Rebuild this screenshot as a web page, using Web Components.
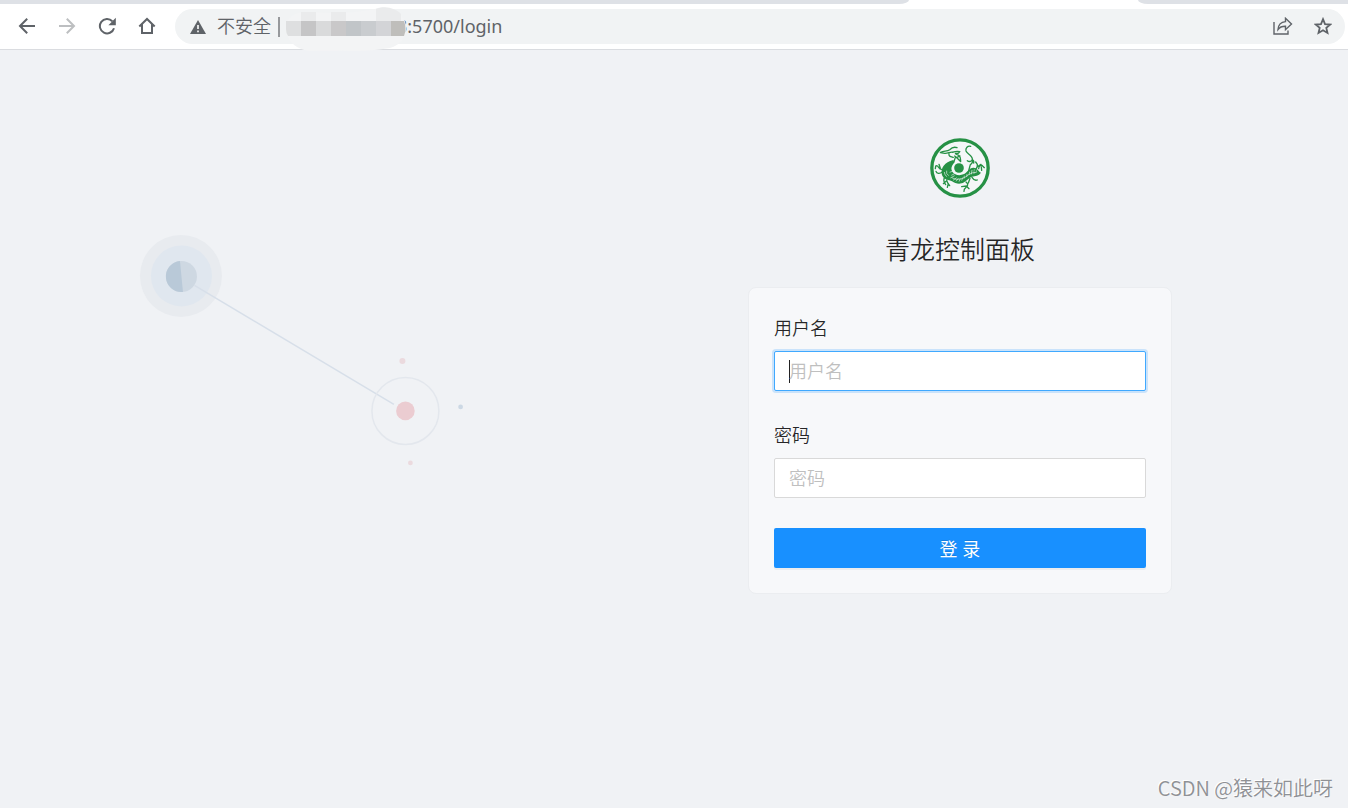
<!DOCTYPE html>
<html lang="zh-CN">
<head>
<meta charset="utf-8">
<title>青龙控制面板</title>
<style>
body {
  margin: 0;
  min-height: 100vh;
  display: flex;
  flex-direction: column;
  background: #f0f2f5;
  color: rgba(0,0,0,.85);
  font-family: "Noto Sans", "Noto Sans CJK SC", sans-serif;
  font-size: 18px;
  font-weight: 350;
}
</style>
</head>
<body>

<browser-bar note="不安全" address="3:5700/login"></browser-bar>
<login-page>
  <node-art slot="art"></node-art>
  <login-card heading="青龙控制面板">
    <dragon-logo slot="logo"></dragon-logo>
    <form-field name="username" label="用户名" active></form-field>
    <form-field name="password" label="密码" type="password"></form-field>
    <submit-button>登 录</submit-button>
  </login-card>
  <water-mark slot="mark">CSDN @猿来如此呀</water-mark>
</login-page>

<script>
function define(name, html, setup) {
  const template = document.createElement('template')
  template.innerHTML = html

  customElements.define(name, class extends HTMLElement {
    constructor() {
      super()
      this.attachShadow({ mode: 'open' }).appendChild(template.content.cloneNode(true))
    }

    connectedCallback() {
      if (setup) setup(this, this.shadowRoot)
    }
  })
}

/* Browser chrome: tab edge, navigation buttons, address bar */
define('browser-bar', `
<style>
:host {
  display: block;
  background: #fff;
  border-bottom: 1px solid #dadce0;
  color: #5f6368;
}

.tabs {
  display: flex;
  justify-content: space-between;
  height: 4px;
}

.tabs span {
  background: #dee1e6;
}

.tabs .before {
  flex: 0 1 909px;
  border-bottom-right-radius: 10px 4px;
}

.tabs .after {
  flex: 0 1 210px;
  border-bottom-left-radius: 10px 4px;
}

.toolbar {
  display: flex;
  align-items: center;
  padding: 5px 3px 5px 7px;
}

button {
  display: flex;
  align-items: center;
  justify-content: center;
  width: 40px;
  height: 36px;
  margin: -1px 0 0;
  padding: 0;
  border: 0;
  background: none;
  color: inherit;
}

button:disabled {
  color: #bdbfc1;
}

svg {
  display: block;
}

.address {
  flex: 1;
  min-width: 0;
  display: flex;
  align-items: center;
  height: 35px;
  margin-left: 8px;
  padding: 0 2px 0 15px;
  border-radius: 18px;
  background: #f1f3f4;
}

.note, .url {
  line-height: 24px;
  padding-bottom: 2px;
}

.note {
  margin-left: 11px;
}

.divider {
  width: 2px;
  height: 20px;
  margin: 0 6px 0 7px;
  background: #97999c;
}

/* hides the host, laid over the start of the address */
.mask {
  position: relative;
  z-index: 1;
  flex: none;
  margin: -3px -10px -7px 0;
}

.url {
  flex: 1;
  min-width: 0;
  font-weight: 400;
}
</style>

<div class="tabs"><span class="before"></span><span class="after"></span></div>
<div class="toolbar">
  <button aria-label="后退">
    <svg width="18" height="18" viewBox="0 0 18 18" fill="none" stroke="currentColor" stroke-width="2"><path d="M17 9H2.5M9.2 1.8 2 9l7.2 7.2"/></svg>
  </button>
  <button aria-label="前进" disabled>
    <svg width="18" height="18" viewBox="0 0 18 18" fill="none" stroke="currentColor" stroke-width="2"><path d="M1 9h14.500M8.800 1.800 16 9l-7.200 7.200"/></svg>
  </button>
  <button aria-label="刷新">
    <svg width="18" height="18" viewBox="0 0 18 18"><path d="M14.300 4.200A7.200 7.200 0 1 0 16 11.200" fill="none" stroke="currentColor" stroke-width="2"/><path d="M17.800.8v7.400h-7.400z" fill="currentColor"/></svg>
  </button>
  <button aria-label="主页">
    <svg width="18" height="18" viewBox="0 0 18 18" fill="none" stroke="currentColor" stroke-width="2"><path d="M1.300 9.500 9 2l7.700 7.500M4 7.500V16h10V7.500"/></svg>
  </button>
  <div class="address">
    <svg width="16" height="16" viewBox="0 0 16 16"><path d="M8 1 0 15h16z" fill="currentColor"/><path d="M8 6v4M8 11.500v1.800" stroke="#fff" stroke-width="1.600"/></svg>
    <span class="note"></span>
    <span class="divider"></span>
    <svg class="mask" width="121" height="44" viewBox="0 0 121 44">
      <path d="M0 22C0 10 8 5 22 5c25 2 48 1 67-3 12-5 30 3 31 17 1 10-5 19-16 22-28 5-52 2-78 3C12 44 0 34 0 22z" fill="#f3f4f5"/>
      <path d="M15 5h15v9H15zM45 5h15v9H45zM90 2c10-4 20 0 25 5v7H90z" fill="#eaebec"/>
      <path d="M0 14h15v15H2Q0 26 0 22z" fill="#dedfe0"/>
      <path d="M15 14h15v15H15z" fill="#c5c5c6"/>
      <path d="M30 14h15v15H30z" fill="#d9dadb"/>
      <path d="M45 14h15v15H45z" fill="#c9c8c9"/>
      <path d="M60 14h15v15H60z" fill="#c1c5c8"/>
      <path d="M75 14h15v15H75z" fill="#c9cccf"/>
      <path d="M90 14h15v15H90z" fill="#d3d4d7"/>
      <path d="M105 14h13q3 8 0 15h-13z" fill="#bfbebb"/>
    </svg>
    <span class="url"></span>
    <button aria-label="分享">
      <svg width="20" height="18" viewBox="0 0 20 18" fill="none" stroke="currentColor" stroke-width="1.400"><path d="M1 5v12h14v-3.500M12.500 1.300 18.500 7l-6 5.700V9.300C9 9.200 6.700 10.200 5 12.500 5.300 8 8 5 12.500 4.600z"/></svg>
    </button>
    <button aria-label="收藏">
      <svg width="18" height="18" viewBox="0 0 18 18" fill="none" stroke="currentColor" stroke-width="1.800"><path d="m9 2.200 2 4.900 5.300.4-4 3.400 1.200 5.100L9 13.300 4.500 16l1.200-5.100-4-3.400 5.300-.4z"/></svg>
    </button>
  </div>
</div>
`, (el, root) => {
  root.querySelector('.note').textContent = el.getAttribute('note')
  root.querySelector('.url').textContent = el.getAttribute('address')
})

define('login-page', `
<style>
:host {
  flex: 1;
  display: grid;
  grid-template-columns: 14fr 19fr;
  grid-template-rows: 1fr auto;
}

main {
  display: flex;
  justify-content: center;
  padding: 88px 16px 24px;
}

footer {
  grid-column: 1 / -1;
  display: flex;
  justify-content: flex-end;
  padding: 0 15px 5px;
}
</style>

<slot name="art"></slot>
<main><slot></slot></main>
<footer><slot name="mark"></slot></footer>
`)

/* Faint connected nodes at the left */
define('node-art', `
<style>
:host {
  display: block;
  min-width: 0;
}

svg {
  display: block;
  width: 100%;
}
</style>

<svg viewBox="0 0 572 460" aria-hidden="true">
  <circle cx="181" cy="226" r="41" fill="#e8ebef"/>
  <circle cx="181.500" cy="226" r="30.500" fill="#e0e7ef"/>
  <circle cx="181.500" cy="226.500" r="15.500" fill="#ced8e2"/>
  <path d="M180 211a15.500 15.500 0 1 0 3 31z" fill="#b9c9d8"/>
  <path d="M194.500 235.500 394 354.500" stroke="#d7dfe9" stroke-width="1.500"/>
  <circle cx="405.500" cy="361" r="33.500" fill="none" stroke="#e3e7ed" stroke-width="1.500"/>
  <circle cx="405.500" cy="361" r="9.300" fill="#ebccd1"/>
  <circle cx="402.500" cy="311" r="3" fill="#ebdade"/>
  <circle cx="460.700" cy="357" r="2.400" fill="#ccd8e4"/>
  <circle cx="410.500" cy="413" r="2.400" fill="#ebdade"/>
</svg>
`)

define('login-card', `
<style>
:host {
  flex: 0 1 424px;
  min-width: 0;
}

header {
  display: flex;
  flex-direction: column;
  align-items: center;
  gap: 31px;
}

h1 {
  margin: 0;
  font-size: 25px;
  line-height: 40px;
  font-weight: inherit;
}

form {
  display: flex;
  flex-direction: column;
  gap: 30px;
  margin-top: 18px;
  padding: 26px 25px 25px;
  border: 1px solid #ebedf0;
  border-radius: 8px;
  background: #f7f8fa;
}
</style>

<header>
  <slot name="logo"></slot>
  <h1></h1>
</header>
<form><slot></slot></form>
`, (el, root) => {
  root.querySelector('h1').textContent = el.getAttribute('heading')
})

define('dragon-logo', `
<style>
:host, svg {
  display: block;
}
</style>

<svg width="60" height="60" viewBox="30 30 180 180" role="img" aria-label="青龙">
  <circle cx="120" cy="120" r="84.500" fill="#f5f7f8" stroke="#269145" stroke-width="10"/>
  <!-- body and tail -->
  <path d="M100 96c-14 3-22 9-29 17-9 12-8 28 1 37 7 7 17 5 24 10 11 8 25 10 36 3 10-6 14-14 24-17 10-2 20-2 27-12-8-4-12-15-22-15-13-1-19 15-31 20-11 5-27 2-33-8-7-12 2-22 7-28z" fill="#269145"/>
  <path d="M89 133l10-4M94 142l10-5M91 150l13-7M99 157l11-8M108 160l7-9M117 161l4-10M125 158l3-9M132 152l1-9M140 147l1-9M147 141l2-10M154 139l2-13M162 137l1-13M169 134l-1-11M95 149q12 8 27 4 14-4 24-13 9-7 22-7M80 128q-3 9 6 15M73 132q0 10 8 14" fill="none" stroke="#f5f7f8" stroke-width="1.800"/>
  <g fill="none" stroke="#269145" stroke-width="4" stroke-linecap="round">
    <!-- head, horns and beard -->
    <path d="M62 73c10-5 20-2 27-8 8-8 17-8 22-6M61 74l13 2c10 1 18-6 25-3M87 78c-2 7 6 8 13 10M97 73c9-3 14-5 22-2-2 5-8 6-14 5l14 8-9 5M104 84c6 4 12 11 17 16M106 88l-4 13M117 84c7 4 4 11 5 17"/>
    <!-- whip above the pearl -->
    <path d="M152 55c-9-2-16 5-14 14 3 9 20 13 19 25-1 7-10 8-15 4M157 93c4 8-1 13-6 17l-5 18M157 96q6 2 4 9"/>
    <!-- claws -->
    <path d="M165 130c2-9 9-11 7-21M172 109l-5-7M176 122c0-9 8-13 12-8l5 5M174 115l9-6M184 117l1 10"/>
    <path d="M66 124c-11 2-9-12-18-11M67 132c-8 6-17 5-19-2M47 115l-1 7M57 109l4 12"/>
    <path d="M74 148c-6 9-2 15 3 22M80 156c1 8 4 11 9 17M78 160l-8 7M84 170l-2 8"/>
    <path d="M138 162c6 5 7 10 1 15-5 4-8 8-7 13M125 176l14-2 8 8M156 148c5 8 9 11 16 8M150 151l-5 14"/>
  </g>
  <circle cx="117" cy="120" r="14.500" fill="#269145"/>
</svg>
`)

define('form-field', `
<style>
:host {
  display: flex;
  flex-direction: column;
  gap: 9px;
}

label {
  line-height: 28px;
}

input {
  box-sizing: border-box;
  width: 100%;
  height: 40px;
  padding: 0 14px;
  border: 1px solid #d9d9d9;
  border-radius: 2px;
  outline: 0;
  background: #fff;
  color: inherit;
  font: inherit;
}

input::placeholder {
  color: #bfbfbf;
}

:host([active]) input {
  border-color: #40a9ff;
  box-shadow: 0 0 0 2px rgba(24,144,255,.2);
  caret-color: transparent;
}

/* steady caret while the box is empty */
:host([active]) input:placeholder-shown {
  background: linear-gradient(#222, #222) 14px center / 1px 23px no-repeat #fff;
}
</style>

<label for="box"></label>
<input id="box">
`, (el, root) => {
  const label = el.getAttribute('label')
  const input = root.querySelector('input')
  root.querySelector('label').textContent = label
  input.name = el.getAttribute('name')
  input.type = el.getAttribute('type') || 'text'
  input.placeholder = label
  input.addEventListener('input', () => { input.style.caretColor = 'auto' })
})

define('submit-button', `
<style>
:host {
  display: block;
}

button {
  display: block;
  width: 100%;
  height: 40px;
  padding: 0;
  border: 0;
  border-radius: 2px;
  background: #1890ff;
  box-shadow: 0 2px 0 rgba(0,0,0,.045);
  color: #fff;
  font: inherit;
  font-weight: 400;
  text-shadow: 0 -1px 0 rgba(0,0,0,.12);
}
</style>

<button type="submit"><slot></slot></button>
`)

define('water-mark', `
<style>
:host {
  display: block;
  color: #8f9195;
  font-family: "Noto Sans CJK SC", sans-serif;
  font-size: 20px;
  line-height: 30px;
  text-shadow: -1px -1px 0 #fff;
}
</style>

<slot></slot>
`)
</script>
</body>
</html>
